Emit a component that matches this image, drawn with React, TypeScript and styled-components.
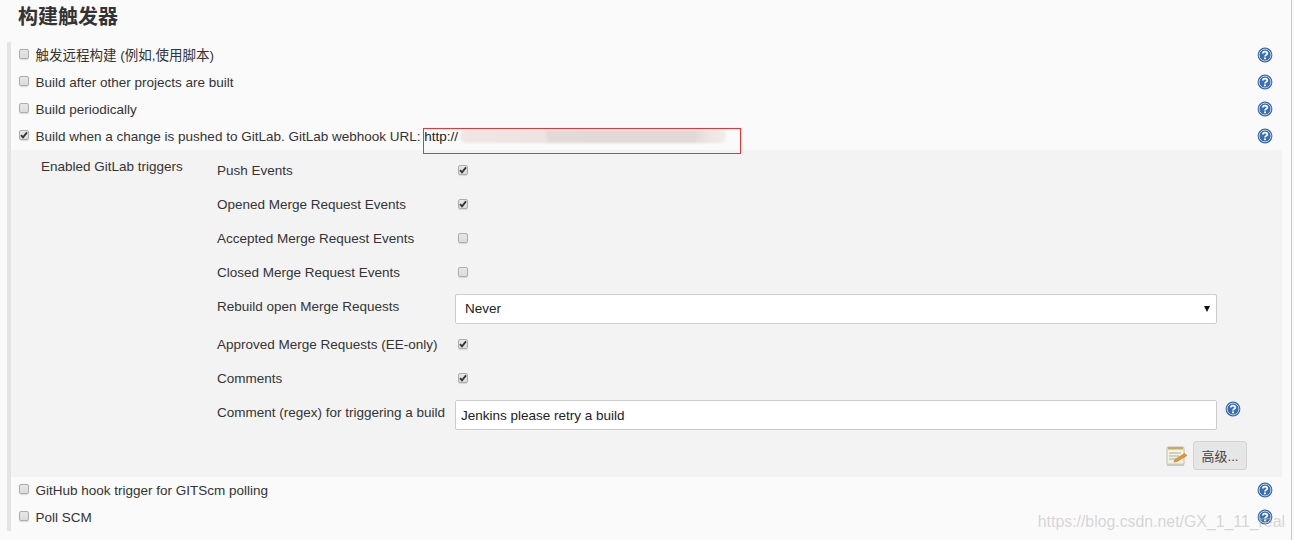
import React from 'react'
import styled, { createGlobalStyle } from 'styled-components';

const GlobalStyle = createGlobalStyle`
    html, body {
        margin: 0;
        padding: 0;
        background: #fafafa;
    }
    body {
        font-family: "Liberation Sans", "Noto Sans CJK SC", sans-serif;
        font-size: 13.5px;
        color: #333;
    }
`

const Page = styled.div`
    position: relative;
    width: 1294px;
    height: 540px;
    overflow: hidden;
    box-sizing: border-box;
    padding: 0 3px 0 7px;
`

const EdgeLine = styled.div`
    position: absolute;
    top: 0;
    right: 2px;
    bottom: 0;
    width: 1px;
    background: #c8c8c8;
`

const Heading = styled.h2`
    margin: 0;
    height: 42px;
    padding: 5px 0 0 11px;
    box-sizing: border-box;
    font-size: 20px;
    line-height: 24px;
    font-weight: 700;
    color: #333;
`

const Section = styled.div`
    border-left: 4px solid #e4e4e4;
    width: 1271px;
    height: 489px;
`

const Row = styled.div`
    position: relative;
    display: flex;
    align-items: center;
    height: 27px;
    padding-left: 8px;
`

const Check = styled.span`
    flex: none;
    display: flex;
    align-items: center;
    justify-content: center;
    width: 10px;
    height: 10px;
    box-sizing: border-box;
    border: 1px solid #adadad;
    border-radius: 2px;
    background: linear-gradient(#e6e6e6, #dcdcdc);
    box-shadow: 0 1px 1px rgba(0, 0, 0, 0.12);
    margin-top: -3px;
`

const Label = styled.label`
    margin-left: 6.5px;
    line-height: 18px;
    white-space: nowrap;
    margin-top: 1px;
`

const HelpSlot = styled.span`
    position: absolute;
    left: 1246px;
    top: 5px;
    width: 16px;
    height: 16px;
`

const UrlText = styled.span`
    color: #222;
`

const RedBox = styled.div`
    position: absolute;
    left: 412px;
    top: 5px;
    width: 316px;
    height: 24px;
    border: 1px solid #ee3333;
    z-index: 2;
`

const Smudge = styled.div`
    position: absolute;
    left: 449px;
    top: 7px;
    width: 266px;
    height: 13px;
    border-radius: 6px;
    background: linear-gradient(90deg, #f1e6e5 0%, #efe3e2 32%, #e3d9d9 33%, #e2d8d8 88%, #efe5e4 94%, #f3ebea 100%);
    filter: blur(0.8px);
`

const Panel = styled.div`
    background: #f3f3f3;
    height: 327px;
    display: grid;
    grid-template-columns: 176px 1fr;
    padding-left: 30px;
    box-sizing: border-box;
`

const PanelTitle = styled.div`
    padding-top: 8px;
    line-height: 18px;
    white-space: nowrap;
`

const Fields = styled.div`
    display: flex;
    flex-direction: column;
    padding-top: 3px;
`

const Field = styled.div<{$h?: number}>`
    display: grid;
    grid-template-columns: 238px 762px 32px;
    height: ${({$h}) => $h ?? 34}px;
    align-items: center;
`

const FieldLabel = styled.div`
    line-height: 18px;
    white-space: nowrap;
    align-self: start;
    padding-top: 9px;
`

const FieldCheck = styled(Check)`
    margin-left: 3px;
    margin-top: 0;
`

const Select = styled.div`
    height: 30px;
    margin-top: 2px;
    box-sizing: border-box;
    background: #fff;
    border: 1px solid #ccc;
    border-radius: 2px;
    padding: 0 6px 1px 9px;
    display: flex;
    align-items: center;
    justify-content: space-between;
    color: #222;
`

const Arrow = styled.span`
    width: 0;
    height: 0;
    border-left: 3px solid transparent;
    border-right: 3px solid transparent;
    border-top: 6px solid #111;
`

const TextBox = styled.input`
    height: 30px;
    width: 100%;
    margin: 5px 0 0;
    box-sizing: border-box;
    background: #fff;
    border: 1px solid #ccc;
    border-radius: 2px;
    padding: 0 5px;
    font: inherit;
    color: #222;
    outline: none;
`

const FieldHelp = styled.span`
    justify-self: start;
    margin-left: 8px;
    margin-top: -7px;
    width: 16px;
    height: 16px;
`

const Actions = styled.div`
    display: flex;
    justify-content: flex-end;
    align-items: center;
    gap: 5px;
    width: 1030px;
    height: 29px;
    margin-top: 12px;
`

const Button = styled.button`
    width: 54px;
    height: 29px;
    padding: 0;
    background: #e6e6e6;
    border: 1px solid #d2d2d2;
    border-radius: 3px;
    font: inherit;
    font-size: 13px;
    color: #444;
`

const Watermark = styled.div`
    position: absolute;
    right: 9px;
    top: 512px;
    font-size: 15.85px;
    line-height: 20px;
    color: rgba(190, 190, 190, 0.62);
    white-space: nowrap;
    z-index: 3;
`

const Tick = () => (
    <svg width="8" height="8" viewBox="0 0 8 8">
        <path d="M1 4.2 L3 6.4 L7 1.4" fill="none" stroke="#333" strokeWidth="1.8" />
    </svg>
);

const HelpIcon = () => (
    <svg width="16" height="16" viewBox="0 0 16 16" style={{display: 'block'}}>
        <circle cx="8" cy="8" r="7.4" fill="#2f62a6" />
        <circle cx="8" cy="8" r="5.9" fill="none" stroke="#dfe8f3" strokeWidth="0.9" />
        <circle cx="8" cy="8" r="5.2" fill="#3a6fb2" />
        <path d="M5.8 6.4 C5.8 3.9 10.3 3.9 10.3 6.4 C10.3 8 8 7.8 8 9.6" fill="none" stroke="#fff" strokeWidth="1.7" />
        <rect x="7.1" y="10.4" width="1.8" height="1.8" fill="#fff" />
    </svg>
);

const NotepadIcon = () => (
    <svg width="22" height="22" viewBox="0 0 22 22" style={{display: 'block'}}>
        <rect x="1" y="2" width="17" height="18" rx="1" fill="#f5f2e6" stroke="#b5b09c" strokeWidth="0.8" />
        <rect x="2" y="2" width="15" height="2.5" fill="#c8ad55" />
        <path d="M3 8 H15 M3 11 H13 M3 14 H10" stroke="#a0a0a0" strokeWidth="0.9" />
        <rect x="1" y="18.5" width="17" height="2.5" fill="#c9c9c2" />
        <path d="M8 17 L9 14.5 L18.5 8.5 L21 10.5 L11 16.5 Z" fill="#e29a2f" stroke="#a8661a" strokeWidth="0.5" />
    </svg>
);

type ToggleProps = {
    label: React.ReactNode;
    checked?: boolean;
}

const Toggle: React.FC<ToggleProps> = ({label, checked}) => (
    <Row>
        <Check>{checked && <Tick />}</Check>
        <Label>{label}</Label>
        <HelpSlot><HelpIcon /></HelpSlot>
    </Row>
);

const CheckField: React.FC<ToggleProps> = ({label, checked}) => (
    <Field>
        <FieldLabel>{label}</FieldLabel>
        <FieldCheck>{checked && <Tick />}</FieldCheck>
    </Field>
);

export default function App() {
    return (
        <Page>
            <GlobalStyle />
            <EdgeLine />
            <Heading>构建触发器</Heading>
            <Section>
                <Toggle label="触发远程构建 (例如,使用脚本)" />
                <Toggle label="Build after other projects are built" />
                <Toggle label="Build periodically" />
                <Row>
                    <Check><Tick /></Check>
                    <Label>Build when a change is pushed to GitLab. GitLab webhook URL: <UrlText>http://</UrlText></Label>
                    <Smudge />
                    <RedBox />
                    <HelpSlot><HelpIcon /></HelpSlot>
                </Row>
                <Panel>
                    <PanelTitle>Enabled GitLab triggers</PanelTitle>
                    <Fields>
                        <CheckField label="Push Events" checked />
                        <CheckField label="Opened Merge Request Events" checked />
                        <CheckField label="Accepted Merge Request Events" />
                        <CheckField label="Closed Merge Request Events" />
                        <Field $h={38}>
                            <FieldLabel>Rebuild open Merge Requests</FieldLabel>
                            <Select>Never<Arrow /></Select>
                        </Field>
                        <CheckField label="Approved Merge Requests (EE-only)" checked />
                        <CheckField label="Comments" checked />
                        <Field>
                            <FieldLabel>Comment (regex) for triggering a build</FieldLabel>
                            <TextBox defaultValue="Jenkins please retry a build" />
                            <FieldHelp><HelpIcon /></FieldHelp>
                        </Field>
                        <Actions>
                            <NotepadIcon />
                            <Button>高级...</Button>
                        </Actions>
                    </Fields>
                </Panel>
                <Toggle label="GitHub hook trigger for GITScm polling" />
                <Toggle label="Poll SCM" />
            </Section>
            <Watermark>https://blog.csdn.net/GX_1_11_real</Watermark>
        </Page>
    );
}
